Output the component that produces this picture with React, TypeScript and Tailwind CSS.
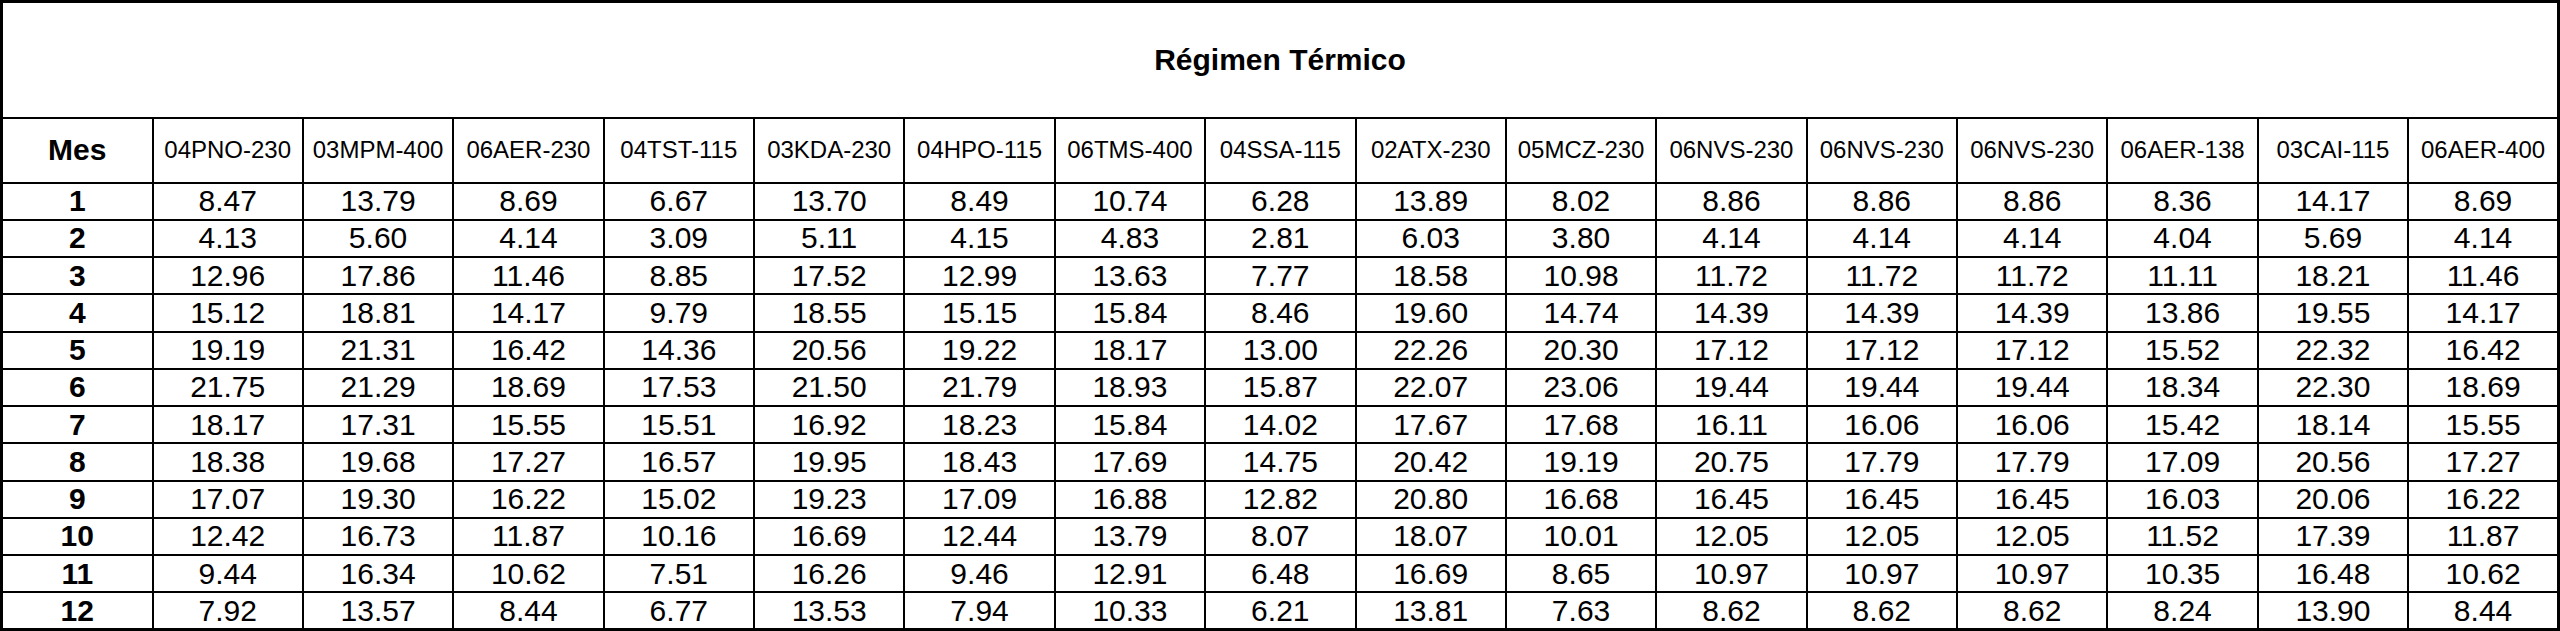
const stations = [
  "04PNO-230",
  "03MPM-400",
  "06AER-230",
  "04TST-115",
  "03KDA-230",
  "04HPO-115",
  "06TMS-400",
  "04SSA-115",
  "02ATX-230",
  "05MCZ-230",
  "06NVS-230",
  "06NVS-230",
  "06NVS-230",
  "06AER-138",
  "03CAI-115",
  "06AER-400",
];

const rows: string[][] = [
  ["8.47", "13.79", "8.69", "6.67", "13.70", "8.49", "10.74", "6.28", "13.89", "8.02", "8.86", "8.86", "8.86", "8.36", "14.17", "8.69"],
  ["4.13", "5.60", "4.14", "3.09", "5.11", "4.15", "4.83", "2.81", "6.03", "3.80", "4.14", "4.14", "4.14", "4.04", "5.69", "4.14"],
  ["12.96", "17.86", "11.46", "8.85", "17.52", "12.99", "13.63", "7.77", "18.58", "10.98", "11.72", "11.72", "11.72", "11.11", "18.21", "11.46"],
  ["15.12", "18.81", "14.17", "9.79", "18.55", "15.15", "15.84", "8.46", "19.60", "14.74", "14.39", "14.39", "14.39", "13.86", "19.55", "14.17"],
  ["19.19", "21.31", "16.42", "14.36", "20.56", "19.22", "18.17", "13.00", "22.26", "20.30", "17.12", "17.12", "17.12", "15.52", "22.32", "16.42"],
  ["21.75", "21.29", "18.69", "17.53", "21.50", "21.79", "18.93", "15.87", "22.07", "23.06", "19.44", "19.44", "19.44", "18.34", "22.30", "18.69"],
  ["18.17", "17.31", "15.55", "15.51", "16.92", "18.23", "15.84", "14.02", "17.67", "17.68", "16.11", "16.06", "16.06", "15.42", "18.14", "15.55"],
  ["18.38", "19.68", "17.27", "16.57", "19.95", "18.43", "17.69", "14.75", "20.42", "19.19", "20.75", "17.79", "17.79", "17.09", "20.56", "17.27"],
  ["17.07", "19.30", "16.22", "15.02", "19.23", "17.09", "16.88", "12.82", "20.80", "16.68", "16.45", "16.45", "16.45", "16.03", "20.06", "16.22"],
  ["12.42", "16.73", "11.87", "10.16", "16.69", "12.44", "13.79", "8.07", "18.07", "10.01", "12.05", "12.05", "12.05", "11.52", "17.39", "11.87"],
  ["9.44", "16.34", "10.62", "7.51", "16.26", "9.46", "12.91", "6.48", "16.69", "8.65", "10.97", "10.97", "10.97", "10.35", "16.48", "10.62"],
  ["7.92", "13.57", "8.44", "6.77", "13.53", "7.94", "10.33", "6.21", "13.81", "7.63", "8.62", "8.62", "8.62", "8.24", "13.90", "8.44"],
];

export default function App() {
  return (
    <div className="w-[2560px] h-[631px] bg-white font-['Liberation_Sans',Arial,sans-serif] text-black">
      <table className="w-full table-fixed border-collapse border-[3px] border-black">
        <colgroup>
          <col className="w-[151px]" />
          {stations.map((_, i) => (
            <col key={i} />
          ))}
        </colgroup>
        <thead>
          <tr className="h-[116px]">
            <th colSpan={17} className="border-2 border-black text-[30px] font-bold leading-none">
              Régimen Térmico
            </th>
          </tr>
          <tr className="h-[65px]">
            <th className="border-2 border-black text-[30px] font-bold leading-none">Mes</th>
            {stations.map((s, i) => (
              <th key={i} className="border-2 border-black text-[24px] font-normal leading-none">
                {s}
              </th>
            ))}
          </tr>
        </thead>
        <tbody>
          {rows.map((r, m) => (
            <tr key={m} className="h-[37.25px]">
              <td className="border-2 border-black text-center text-[30px] font-bold leading-none">{m + 1}</td>
              {r.map((v, i) => (
                <td key={i} className="border-2 border-black text-center text-[30px] leading-none">
                  {v}
                </td>
              ))}
            </tr>
          ))}
        </tbody>
      </table>
    </div>
  );
}
